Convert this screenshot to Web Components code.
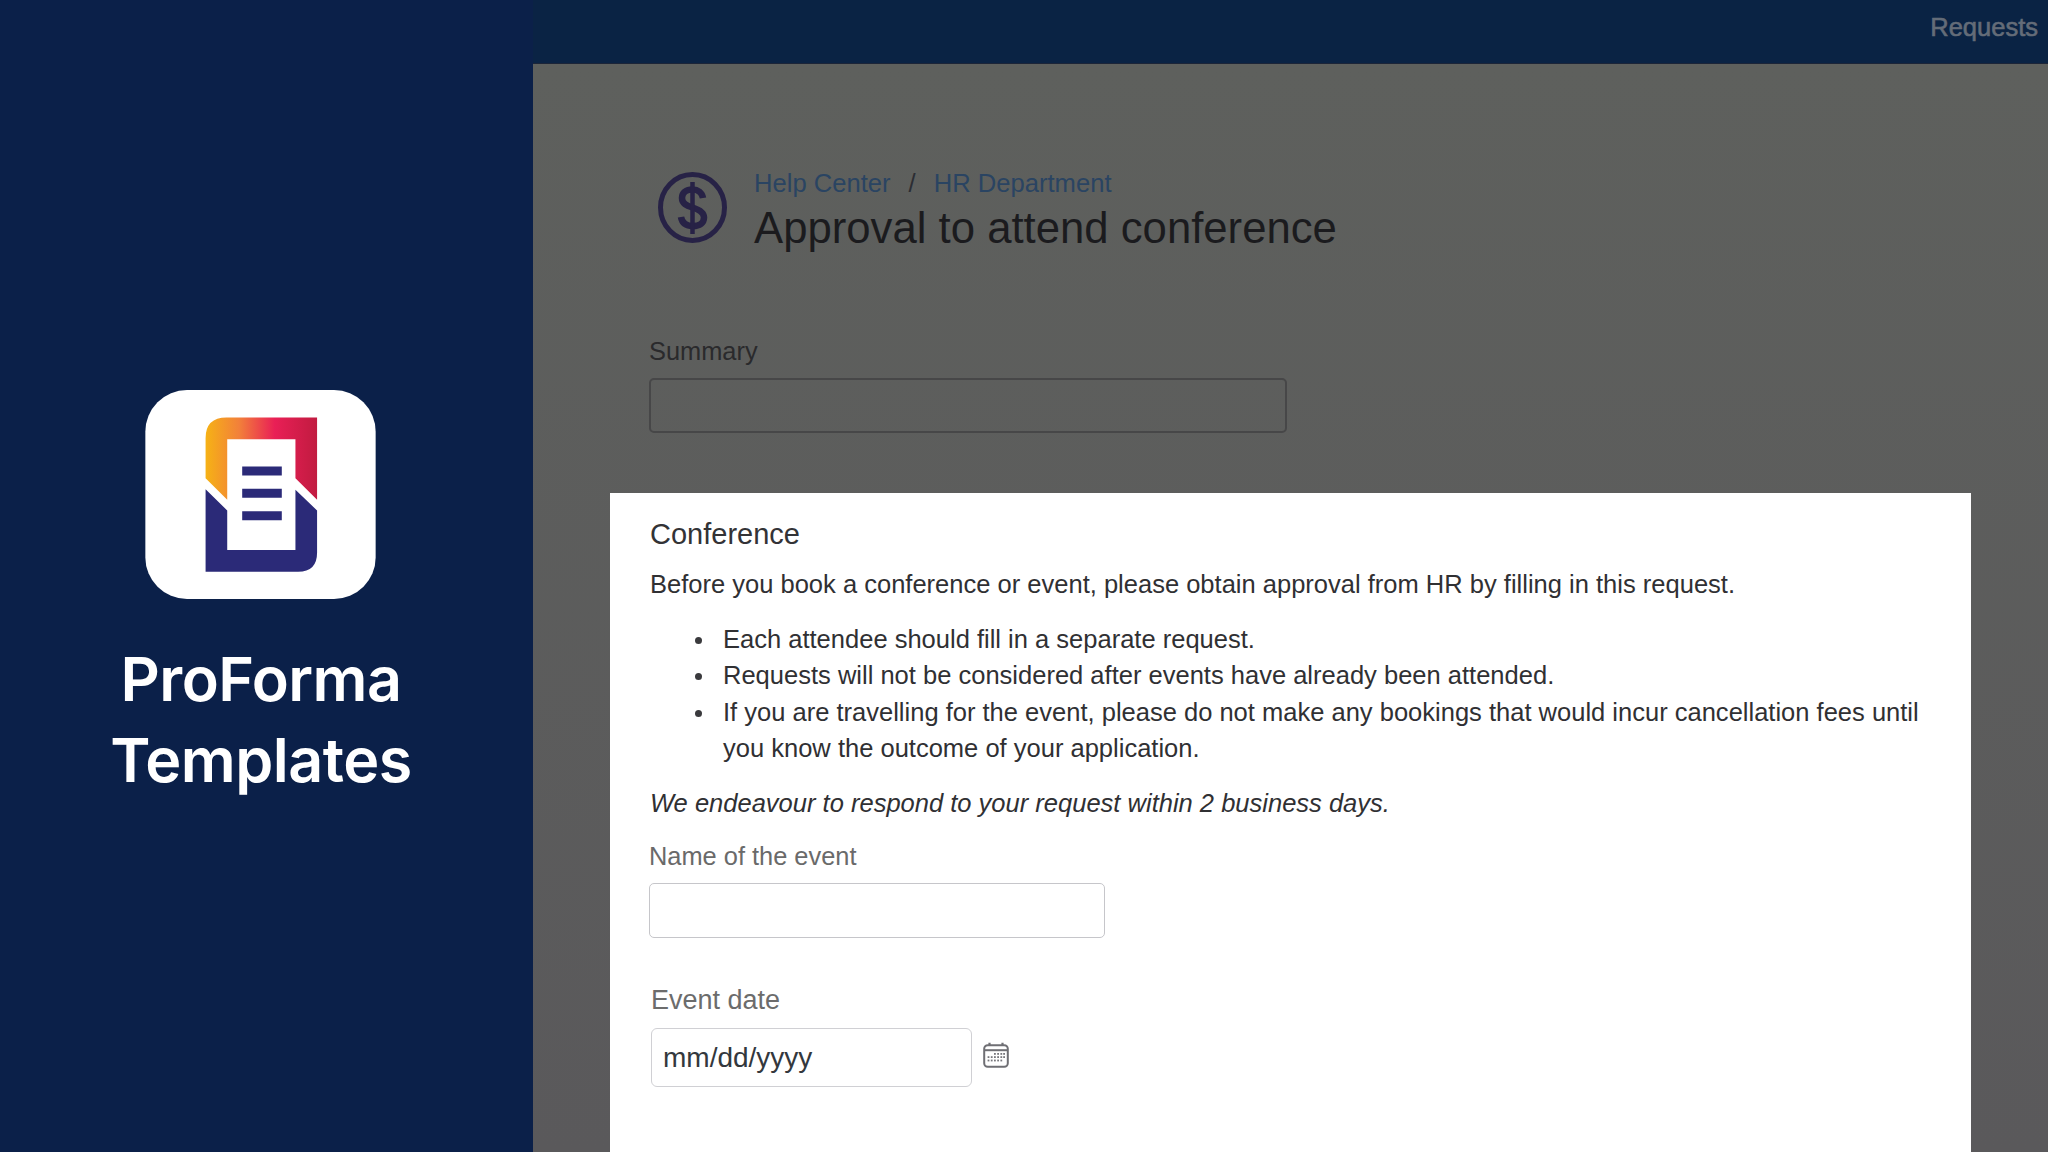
<!DOCTYPE html>
<html lang="en">
<head>
<meta charset="utf-8">
<title>ProForma Templates</title>
<style>
html,body{margin:0;padding:0;height:1152px;overflow:hidden;background:#5c5c5c;font-family:"Liberation Sans",Arial,sans-serif}
pf-card li{list-style:none;position:relative}
pf-card li::before{content:"";position:absolute;left:-28px;top:16px;width:7px;height:7px;border-radius:50%;background:#3a3a3d}
</style>
</head>
<body>
<pf-app>
  <pf-sidebar slot="side">
    <pf-logo></pf-logo>
    <span>ProForma</span>
    <span>Templates</span>
  </pf-sidebar>
  <pf-topbar slot="top">Requests</pf-topbar>
  <pf-page-head slot="main">
    <pf-dollar slot="icon"></pf-dollar>
    <span slot="crumb-a">Help Center</span>
    <span slot="crumb-b">HR Department</span>
    Approval to attend conference
  </pf-page-head>
  <pf-field slot="main" class="summary" tone="dim" label="Summary"></pf-field>
  <pf-card slot="main">
    <h2>Conference</h2>
    <p>Before you book a conference or event, please obtain approval from HR by filling in this request.</p>
    <ul>
      <li>Each attendee should fill in a separate request.</li>
      <li>Requests will not be considered after events have already been attended.</li>
      <li>If you are travelling for the event, please do not make any bookings that would incur cancellation fees until you know the outcome of your application.</li>
    </ul>
    <p class="em">We endeavour to respond to your request within 2 business days.</p>
    <pf-field label="Name of the event" class="name"></pf-field>
    <pf-date-field></pf-date-field>
  </pf-card>
</pf-app>
<script>
function define(name, html, setup){
  customElements.define(name, class extends HTMLElement{
    constructor(){super();const r=this.attachShadow({mode:'open'});r.innerHTML=html;}
    connectedCallback(){if(setup)setup(this,this.shadowRoot);}
  });
}
define('pf-app',`<style>
:host{display:grid;grid-template-columns:533px 1fr;grid-template-rows:64px 1fr;width:2048px;height:1152px;overflow:hidden}
.side{grid-row:1/3;display:block}
.top{display:block}
main{display:flex;flex-direction:column;padding:0 77px;overflow:hidden;background:linear-gradient(#5e605d,#5a595b)}
</style>
<div class="side"><slot name="side"></slot></div>
<div class="top"><slot name="top"></slot></div>
<main><slot name="main"></slot></main>`);

define('pf-sidebar',`<style>
:host{display:flex;flex-direction:column;align-items:center;box-sizing:border-box;height:1152px;padding:390px 13px 0 0;background:#0b2049;color:#fff;font:600 61px/81px Inter,"Liberation Sans",sans-serif;letter-spacing:-.5px}
::slotted(span){display:block;height:81px;margin-left:2px}
::slotted(pf-logo){margin-bottom:40px}
</style><slot></slot>`);

define('pf-logo',`<style>:host{display:block;width:231px;height:209px}svg{display:block}</style>
<svg width="231" height="209" viewBox="76 60 692 628" aria-hidden="true">
<defs><linearGradient id="g" x1="257" y1="0" x2="592" y2="0" gradientUnits="userSpaceOnUse">
<stop offset="0" stop-color="#f6b215"/><stop offset=".3" stop-color="#f2803a"/><stop offset=".62" stop-color="#e91f56"/><stop offset="1" stop-color="#c11b40"/></linearGradient></defs>
<rect x="76" y="60" width="692" height="628" rx="125" fill="#fff"/>
<path d="M257 325V205Q257 143 320 143H592V390L527 325V208H322V390Z" fill="url(#g)"/>
<path d="M257 358L322 422V541H527V360L592 422V548Q592 606 535 606H257Z" fill="#2b2a78"/>
<path d="M367 290h119v27H367zM367 357h119v27H367zM367 424h119v27H367z" fill="#2b2a78"/>
</svg>`);

define('pf-topbar',`<style>
:host{display:flex;align-items:center;justify-content:flex-end;box-sizing:border-box;height:64px;padding:0 10px 8px 0;background:#0a2344;border-bottom:1px solid #1c2538;color:#646c78;font:25.5px "Liberation Sans",sans-serif;-webkit-text-stroke:.6px #646c78}
</style><slot></slot>`);

define('pf-page-head',`<style>
:host{display:flex;align-items:flex-start;padding:103px 0 0 48px;color:#1b1b1e;font:43.7px/56px "Liberation Sans",sans-serif}
.ic{width:69px;margin:5px 27px 0 0}
.crumbs{font-size:25.6px;line-height:32px;color:#2a4462;display:flex;gap:18px;white-space:pre}
.crumbs i{font-style:normal;color:#2b2d33}
.title{margin-top:1px}
</style>
<div class="ic"><slot name="icon"></slot></div>
<div><div class="crumbs"><slot name="crumb-a"></slot><i>/</i><slot name="crumb-b"></slot></div><div class="title"><slot></slot></div></div>`);

define('pf-dollar',`<style>:host{display:block;width:69px;height:71px}svg{display:block}</style>
<svg width="69" height="71" viewBox="0 0 69 71" aria-hidden="true"><ellipse cx="34.500" cy="35.500" rx="32" ry="33" fill="none" stroke="#272246" stroke-width="5"/>
<path d="M45 26C44 20.500 40 17.500 34.500 17.500C28 17.500 24 21 24 26C24 31.500 28.500 33.500 34.500 35.500C41 37.500 46 40 46 45.500C46 51 41.500 54 35 54C28.500 54 24 51 23 45" fill="none" stroke="#272246" stroke-width="6.500"/>
<path d="M34.500 10V62" stroke="#272246" stroke-width="4.500"/></svg>`);

define('pf-field',`<style>
:host{display:block;font:25.4px/32px "Liberation Sans",sans-serif;color:#6a6a6a}
:host([tone=dim]){color:#2a2a2c}
.box{box-sizing:border-box;height:55px;margin-top:11px;border:1.500px solid #c6c6ca;border-radius:5px;background:#fff}
:host([tone=dim]) .box{border:2px solid #474748;background:transparent}
</style><div class="l"></div><div class="box"></div>`,(el,r)=>{r.querySelector('.l').textContent=el.getAttribute('label');
 if(el.classList.contains('summary')){el.style.width='638px';el.style.margin='79px 0 60px 39px';}
 if(el.classList.contains('name')){el.style.width='456px';el.style.margin='0 0 0 -1px';}
});

define('pf-date-field',`<style>
:host{display:block;margin:46px 0 0 1px;font:27px/32px "Liberation Sans",sans-serif;color:#6c6c6c}
.row{display:flex;align-items:center;gap:11px;margin-top:12px}
.box{box-sizing:border-box;width:321px;height:59px;padding-left:11px;border:1.500px solid #d0d0d4;border-radius:6px;color:#33383d;font-size:28px;line-height:57px}
svg{display:block;margin-top:-4px}
</style>
<div>Event date</div>
<div class="row"><div class="box">mm/dd/yyyy</div>
<svg width="26" height="26" viewBox="0 0 26 26" aria-hidden="true">
<rect x="1.200" y="3.200" width="23.600" height="21.600" rx="3.500" fill="none" stroke="#6f6f74" stroke-width="2"/>
<path d="M1.500 8.200H24.500" stroke="#6f6f74" stroke-width="2"/><path d="M6.500 .8V4M19.500 .8V4" stroke="#6f6f74" stroke-width="2.200"/>
<g fill="#77777c"><rect x="11" y="11" width="1.800" height="1.800"/><rect x="14.200" y="11" width="1.800" height="1.800"/><rect x="17.400" y="11" width="1.800" height="1.800"/><rect x="20.200" y="11" width="1.800" height="1.800"/>
<rect x="4.600" y="14.200" width="1.800" height="1.800"/><rect x="7.800" y="14.200" width="1.800" height="1.800"/><rect x="11" y="14.200" width="1.800" height="1.800"/><rect x="14.200" y="14.200" width="1.800" height="1.800"/><rect x="17.400" y="14.200" width="1.800" height="1.800"/><rect x="20.200" y="14.200" width="1.800" height="1.800"/>
<rect x="4.600" y="17.600" width="1.800" height="1.800"/><rect x="7.800" y="17.600" width="1.800" height="1.800"/><rect x="11" y="17.600" width="1.800" height="1.800"/><rect x="14.200" y="17.600" width="1.800" height="1.800"/><rect x="17.400" y="17.600" width="1.800" height="1.800"/></g></svg></div>`);

define('pf-card',`<style>
:host{display:block;box-sizing:border-box;flex:none;width:1361px;height:700px;padding:23px 40px 0;background:#fff;color:#303033;font:25.52px/36.600px "Liberation Sans",sans-serif}
::slotted(h2){margin:0 0 14px;font:400 29px/36px "Liberation Sans",sans-serif;color:#333336}
::slotted(p){margin:0}
::slotted(ul){margin:18px 0 18px;padding:0 0 0 73px}
::slotted(.em){font-style:italic;margin-bottom:18px}
</style><slot></slot>`);
</script>
</body>
</html>
